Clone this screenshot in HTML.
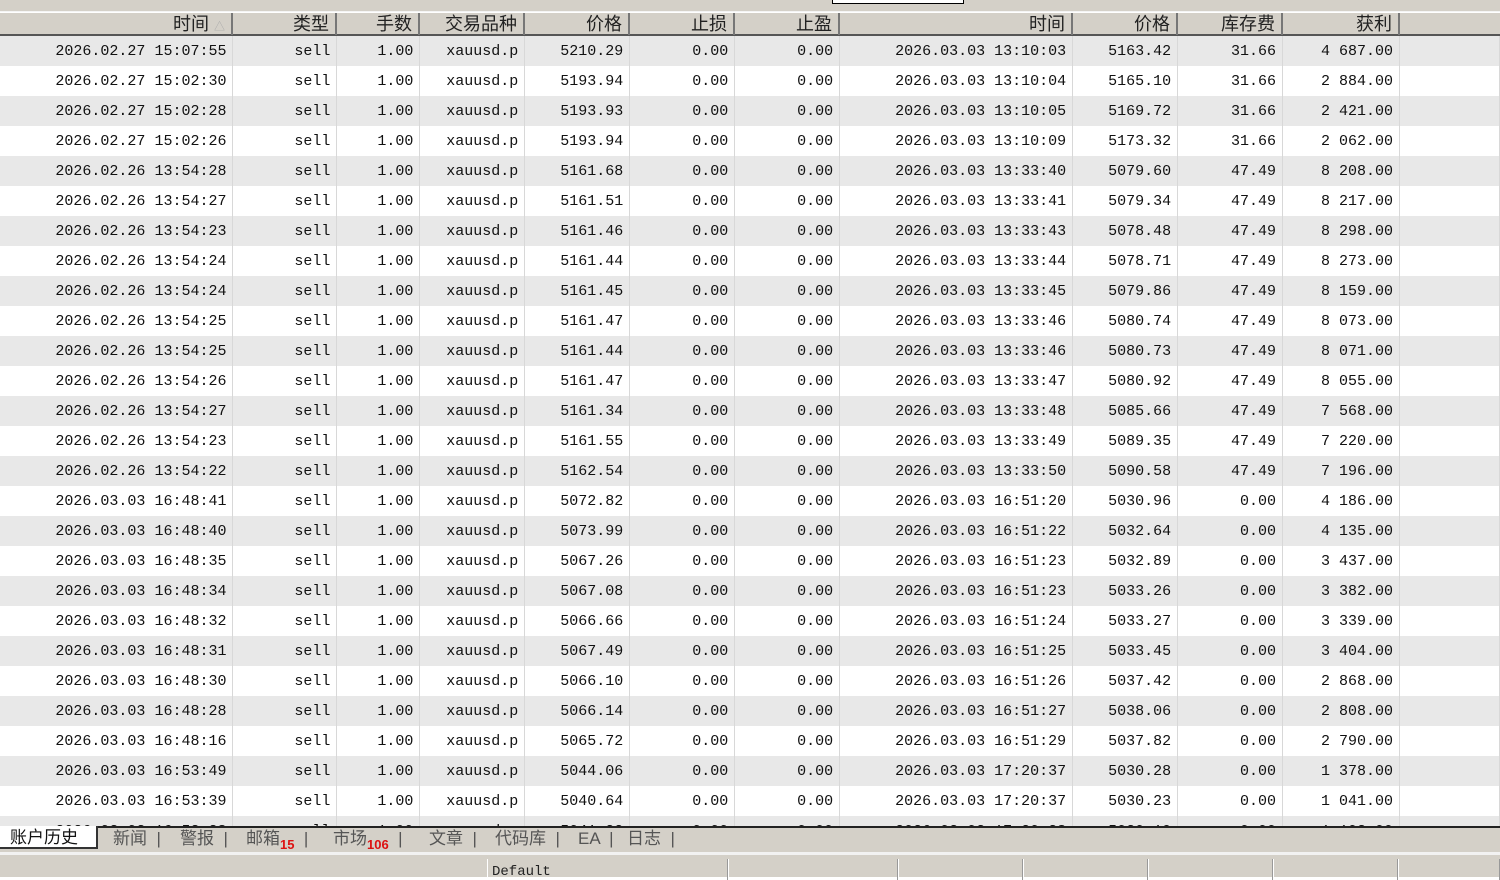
<!DOCTYPE html>
<html><head><meta charset="utf-8"><style>
*{margin:0;padding:0;box-sizing:border-box}
body{width:1500px;height:877px;overflow:hidden;background:#fff;font-family:"Liberation Mono","Noto Sans CJK SC",monospace;color:#111;position:relative}
.top{position:absolute;left:0;top:0;width:1500px;height:12px;background:#d4d0c8;border-bottom:1px solid #f4f4f4}
.top .t{position:absolute;top:0;height:4px;background:#fff;border:1px solid #000;border-top:none;left:832px;width:132px}
.hdr{position:absolute;left:0;top:12px;height:24px;width:1500px;background:#d4d0c8;border-top:1px solid #fff;border-bottom:2px solid #555}
.hdr div{position:absolute;top:0;height:22px;line-height:22px;text-align:right;padding-right:6px;font-family:"Liberation Sans","Noto Sans CJK SC",sans-serif;font-size:18px;color:#222;border-right:2px solid #777}
table{position:absolute;left:0;top:36px;border-collapse:collapse;table-layout:fixed}
td{height:30px;font-size:15px;text-align:right;padding-right:6px;padding-top:1px;border-right:1px solid #d8d8d8;white-space:nowrap;overflow:hidden}
tr:nth-child(odd) td{background:#e8e8e8}
tr:nth-child(even) td{background:#fff}
.tabs{position:absolute;left:0;top:826px;width:1500px;height:26px;background:#d4d0c8;border-top:2px solid #222;font-family:"Liberation Sans","Noto Sans CJK SC",sans-serif;font-size:17px;color:#555}
.tabs span{position:absolute;top:0;line-height:22px}
.tabs .a{left:0;width:98px;height:23px;background:#fff;color:#111;padding-left:10px;border-right:2px solid #333;border-bottom:2px solid #333;top:-2px;line-height:24px}
.tabs b{color:#d11;font-size:13px;font-weight:bold;vertical-align:-5px}
.sb{position:absolute;left:0;top:852px;width:1500px;height:25px;background:#d4d0c8;border-top:3px solid #f2f2f2}
.sb div{position:absolute;top:4px;height:21px;border-left:1px solid #fff;border-right:1px solid #999}
</style></head><body>
<div class="top"><div class="t"></div></div>
<div class="hdr">
<div style="left:0;width:233px">时间 <span style="color:#aaa;font-size:11px">△</span></div>
<div style="left:233px;width:104px">类型</div>
<div style="left:337px;width:83px">手数</div>
<div style="left:420px;width:105px">交易品种</div>
<div style="left:525px;width:105px">价格</div>
<div style="left:630px;width:105px">止损</div>
<div style="left:735px;width:105px">止盈</div>
<div style="left:840px;width:233px">时间</div>
<div style="left:1073px;width:105px">价格</div>
<div style="left:1178px;width:105px">库存费</div>
<div style="left:1283px;width:117px">获利</div>
</div>
<table>
<colgroup><col style="width:233px"><col style="width:104px"><col style="width:83px"><col style="width:105px"><col style="width:105px"><col style="width:105px"><col style="width:105px"><col style="width:233px"><col style="width:105px"><col style="width:105px"><col style="width:117px"><col style="width:100px"></colgroup>
<tr><td>2026.02.27 15:07:55</td><td>sell</td><td>1.00</td><td>xauusd.p</td><td>5210.29</td><td>0.00</td><td>0.00</td><td>2026.03.03 13:10:03</td><td>5163.42</td><td>31.66</td><td>4 687.00</td><td></td></tr>
<tr><td>2026.02.27 15:02:30</td><td>sell</td><td>1.00</td><td>xauusd.p</td><td>5193.94</td><td>0.00</td><td>0.00</td><td>2026.03.03 13:10:04</td><td>5165.10</td><td>31.66</td><td>2 884.00</td><td></td></tr>
<tr><td>2026.02.27 15:02:28</td><td>sell</td><td>1.00</td><td>xauusd.p</td><td>5193.93</td><td>0.00</td><td>0.00</td><td>2026.03.03 13:10:05</td><td>5169.72</td><td>31.66</td><td>2 421.00</td><td></td></tr>
<tr><td>2026.02.27 15:02:26</td><td>sell</td><td>1.00</td><td>xauusd.p</td><td>5193.94</td><td>0.00</td><td>0.00</td><td>2026.03.03 13:10:09</td><td>5173.32</td><td>31.66</td><td>2 062.00</td><td></td></tr>
<tr><td>2026.02.26 13:54:28</td><td>sell</td><td>1.00</td><td>xauusd.p</td><td>5161.68</td><td>0.00</td><td>0.00</td><td>2026.03.03 13:33:40</td><td>5079.60</td><td>47.49</td><td>8 208.00</td><td></td></tr>
<tr><td>2026.02.26 13:54:27</td><td>sell</td><td>1.00</td><td>xauusd.p</td><td>5161.51</td><td>0.00</td><td>0.00</td><td>2026.03.03 13:33:41</td><td>5079.34</td><td>47.49</td><td>8 217.00</td><td></td></tr>
<tr><td>2026.02.26 13:54:23</td><td>sell</td><td>1.00</td><td>xauusd.p</td><td>5161.46</td><td>0.00</td><td>0.00</td><td>2026.03.03 13:33:43</td><td>5078.48</td><td>47.49</td><td>8 298.00</td><td></td></tr>
<tr><td>2026.02.26 13:54:24</td><td>sell</td><td>1.00</td><td>xauusd.p</td><td>5161.44</td><td>0.00</td><td>0.00</td><td>2026.03.03 13:33:44</td><td>5078.71</td><td>47.49</td><td>8 273.00</td><td></td></tr>
<tr><td>2026.02.26 13:54:24</td><td>sell</td><td>1.00</td><td>xauusd.p</td><td>5161.45</td><td>0.00</td><td>0.00</td><td>2026.03.03 13:33:45</td><td>5079.86</td><td>47.49</td><td>8 159.00</td><td></td></tr>
<tr><td>2026.02.26 13:54:25</td><td>sell</td><td>1.00</td><td>xauusd.p</td><td>5161.47</td><td>0.00</td><td>0.00</td><td>2026.03.03 13:33:46</td><td>5080.74</td><td>47.49</td><td>8 073.00</td><td></td></tr>
<tr><td>2026.02.26 13:54:25</td><td>sell</td><td>1.00</td><td>xauusd.p</td><td>5161.44</td><td>0.00</td><td>0.00</td><td>2026.03.03 13:33:46</td><td>5080.73</td><td>47.49</td><td>8 071.00</td><td></td></tr>
<tr><td>2026.02.26 13:54:26</td><td>sell</td><td>1.00</td><td>xauusd.p</td><td>5161.47</td><td>0.00</td><td>0.00</td><td>2026.03.03 13:33:47</td><td>5080.92</td><td>47.49</td><td>8 055.00</td><td></td></tr>
<tr><td>2026.02.26 13:54:27</td><td>sell</td><td>1.00</td><td>xauusd.p</td><td>5161.34</td><td>0.00</td><td>0.00</td><td>2026.03.03 13:33:48</td><td>5085.66</td><td>47.49</td><td>7 568.00</td><td></td></tr>
<tr><td>2026.02.26 13:54:23</td><td>sell</td><td>1.00</td><td>xauusd.p</td><td>5161.55</td><td>0.00</td><td>0.00</td><td>2026.03.03 13:33:49</td><td>5089.35</td><td>47.49</td><td>7 220.00</td><td></td></tr>
<tr><td>2026.02.26 13:54:22</td><td>sell</td><td>1.00</td><td>xauusd.p</td><td>5162.54</td><td>0.00</td><td>0.00</td><td>2026.03.03 13:33:50</td><td>5090.58</td><td>47.49</td><td>7 196.00</td><td></td></tr>
<tr><td>2026.03.03 16:48:41</td><td>sell</td><td>1.00</td><td>xauusd.p</td><td>5072.82</td><td>0.00</td><td>0.00</td><td>2026.03.03 16:51:20</td><td>5030.96</td><td>0.00</td><td>4 186.00</td><td></td></tr>
<tr><td>2026.03.03 16:48:40</td><td>sell</td><td>1.00</td><td>xauusd.p</td><td>5073.99</td><td>0.00</td><td>0.00</td><td>2026.03.03 16:51:22</td><td>5032.64</td><td>0.00</td><td>4 135.00</td><td></td></tr>
<tr><td>2026.03.03 16:48:35</td><td>sell</td><td>1.00</td><td>xauusd.p</td><td>5067.26</td><td>0.00</td><td>0.00</td><td>2026.03.03 16:51:23</td><td>5032.89</td><td>0.00</td><td>3 437.00</td><td></td></tr>
<tr><td>2026.03.03 16:48:34</td><td>sell</td><td>1.00</td><td>xauusd.p</td><td>5067.08</td><td>0.00</td><td>0.00</td><td>2026.03.03 16:51:23</td><td>5033.26</td><td>0.00</td><td>3 382.00</td><td></td></tr>
<tr><td>2026.03.03 16:48:32</td><td>sell</td><td>1.00</td><td>xauusd.p</td><td>5066.66</td><td>0.00</td><td>0.00</td><td>2026.03.03 16:51:24</td><td>5033.27</td><td>0.00</td><td>3 339.00</td><td></td></tr>
<tr><td>2026.03.03 16:48:31</td><td>sell</td><td>1.00</td><td>xauusd.p</td><td>5067.49</td><td>0.00</td><td>0.00</td><td>2026.03.03 16:51:25</td><td>5033.45</td><td>0.00</td><td>3 404.00</td><td></td></tr>
<tr><td>2026.03.03 16:48:30</td><td>sell</td><td>1.00</td><td>xauusd.p</td><td>5066.10</td><td>0.00</td><td>0.00</td><td>2026.03.03 16:51:26</td><td>5037.42</td><td>0.00</td><td>2 868.00</td><td></td></tr>
<tr><td>2026.03.03 16:48:28</td><td>sell</td><td>1.00</td><td>xauusd.p</td><td>5066.14</td><td>0.00</td><td>0.00</td><td>2026.03.03 16:51:27</td><td>5038.06</td><td>0.00</td><td>2 808.00</td><td></td></tr>
<tr><td>2026.03.03 16:48:16</td><td>sell</td><td>1.00</td><td>xauusd.p</td><td>5065.72</td><td>0.00</td><td>0.00</td><td>2026.03.03 16:51:29</td><td>5037.82</td><td>0.00</td><td>2 790.00</td><td></td></tr>
<tr><td>2026.03.03 16:53:49</td><td>sell</td><td>1.00</td><td>xauusd.p</td><td>5044.06</td><td>0.00</td><td>0.00</td><td>2026.03.03 17:20:37</td><td>5030.28</td><td>0.00</td><td>1 378.00</td><td></td></tr>
<tr><td>2026.03.03 16:53:39</td><td>sell</td><td>1.00</td><td>xauusd.p</td><td>5040.64</td><td>0.00</td><td>0.00</td><td>2026.03.03 17:20:37</td><td>5030.23</td><td>0.00</td><td>1 041.00</td><td></td></tr>
<tr><td>2026.03.03 16:53:38</td><td>sell</td><td>1.00</td><td>xauusd.p</td><td>5041.22</td><td>0.00</td><td>0.00</td><td>2026.03.03 17:20:38</td><td>5030.19</td><td>0.00</td><td>1 103.00</td><td></td></tr>
</table>
<div class="tabs">
<span class="a">账户历史</span>
<span style="left:113px">新闻 &nbsp;|</span>
<span style="left:180px">警报 &nbsp;|</span>
<span style="left:246px">邮箱<b>15</b> &nbsp;|</span>
<span style="left:333px">市场<b>106</b> &nbsp;|</span>
<span style="left:429px">文章 &nbsp;|</span>
<span style="left:495px">代码库 &nbsp;|</span>
<span style="left:578px">EA &nbsp;|</span>
<span style="left:627px">日志 &nbsp;|</span>
</div>
<div class="sb">
<div style="left:487px;width:241px;font-family:'Liberation Mono',monospace;font-size:14px;padding:5px 0 0 4px;color:#222">Default</div>
<div style="left:728px;width:170px"></div>
<div style="left:898px;width:125px"></div>
<div style="left:1023px;width:125px"></div>
<div style="left:1148px;width:125px"></div>
<div style="left:1273px;width:125px"></div>
<div style="left:1398px;width:102px"></div>
</div>
</body></html>
